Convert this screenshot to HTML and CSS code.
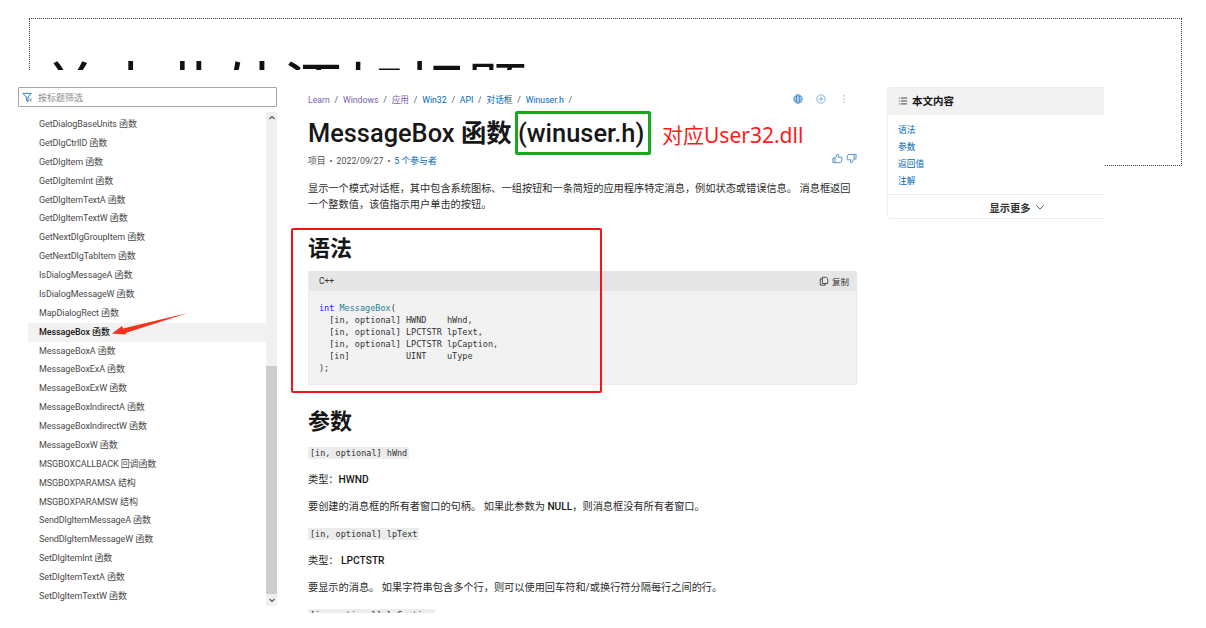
FILE: index.html
```html
<!DOCTYPE html>
<html lang="zh-CN">
<head>
  <meta charset="UTF-8" />
  <meta name="viewport" content="width=device-width, initial-scale=1" />
  <title>MessageBox 函数</title>
  <link rel="stylesheet" href="styles.css">
</head>
<body>
  <div class="slide">
    <!-- slide title placeholder, mostly hidden behind the pasted picture -->
    <div class="placeholder">
      <div class="placeholder-clip">单击此处添加标题</div>
    </div>

    <div class="shot">
      <aside class="toc">
        <div class="filter">
          <svg class="filter-icon" viewBox="0 0 12 12" width="11" height="11" fill="none" stroke="#0067b8" stroke-width="0.9">
            <path d="M1 1.5h9L6.5 5.5v5L4.8 9.2V5.5z" />
            <path d="M8 7.5l2.5 2.5M10.5 7.5L8 10" stroke="#666" />
          </svg>
          <span>按标题筛选</span>
        </div>
        <div class="toc-body">
          <ul class="toc-list">
            <li>GetDialogBaseUnits 函数</li>
            <li>GetDlgCtrlID 函数</li>
            <li>GetDlgItem 函数</li>
            <li>GetDlgItemInt 函数</li>
            <li>GetDlgItemTextA 函数</li>
            <li>GetDlgItemTextW 函数</li>
            <li>GetNextDlgGroupItem 函数</li>
            <li>GetNextDlgTabItem 函数</li>
            <li>IsDialogMessageA 函数</li>
            <li>IsDialogMessageW 函数</li>
            <li>MapDialogRect 函数</li>
            <li class="active">MessageBox 函数</li>
            <li>MessageBoxA 函数</li>
            <li>MessageBoxExA 函数</li>
            <li>MessageBoxExW 函数</li>
            <li>MessageBoxIndirectA 函数</li>
            <li>MessageBoxIndirectW 函数</li>
            <li>MessageBoxW 函数</li>
            <li>MSGBOXCALLBACK 回调函数</li>
            <li>MSGBOXPARAMSA 结构</li>
            <li>MSGBOXPARAMSW 结构</li>
            <li>SendDlgItemMessageA 函数</li>
            <li>SendDlgItemMessageW 函数</li>
            <li>SetDlgItemInt 函数</li>
            <li>SetDlgItemTextA 函数</li>
            <li>SetDlgItemTextW 函数</li>
          </ul>
          <div class="scrollbar">
            <svg class="sb-arrow" viewBox="0 0 10 10" width="10" height="10" fill="none" stroke="#555" stroke-width="1.2"><path d="M2.5 6l2.5-2.5L7.5 6" /></svg>
            <div class="sb-track"><div class="sb-thumb"></div></div>
            <svg class="sb-arrow" viewBox="0 0 10 10" width="10" height="10" fill="none" stroke="#555" stroke-width="1.2"><path d="M2.5 4l2.5 2.5L7.5 4" /></svg>
          </div>
        </div>
      </aside>

      <main class="article">
        <div class="crumbs-row">
          <div class="crumbs">
            <a class="visited">Learn</a><i>/</i><a class="visited">Windows</a><i>/</i><a class="visited">应用</a><i>/</i><a>Win32</a><i>/</i><a>API</a><i>/</i><a>对话框</a><i>/</i><a>Winuser.h</a><i>/</i>
          </div>
          <div class="actions">
            <svg viewBox="0 0 12 12" width="10" height="10" fill="none" stroke="#2f7fc4" stroke-width="1">
              <circle cx="6" cy="6" r="5" />
              <ellipse cx="6" cy="6" rx="2.2" ry="5" />
              <path d="M1 6h10M1.8 3.5h8.4M1.8 8.5h8.4" />
            </svg>
            <svg viewBox="0 0 12 12" width="10" height="10" fill="none" stroke="#5a9bd5" stroke-width="0.9">
              <circle cx="6" cy="6" r="5" />
              <path d="M6 3.2v5.6M3.2 6h5.6" />
            </svg>
            <svg viewBox="0 0 12 12" width="10" height="10" fill="#7fb2de">
              <circle cx="6" cy="2" r="0.9" />
              <circle cx="6" cy="6" r="0.9" />
              <circle cx="6" cy="10" r="0.9" />
            </svg>
          </div>
        </div>

        <h1 class="title">MessageBox <span class="title-cjk">函数</span> (winuser.h)</h1>

        <div class="meta-row">
          <div class="meta">项目<b>•</b>2022/09/27<b>•</b><a>5 个参与者</a></div>
          <div class="thumbs">
            <svg viewBox="0 0 12 12" width="11" height="11" fill="none" stroke="#2f7fc4" stroke-width="0.9">
              <path d="M1 5.5h2.2v5H1zM3.2 5.5L6 1.2c1 0 1.3.8 1 1.8L6.6 4.6h3.6c.8 0 1 .7.8 1.3l-1 3.8c-.2.6-.5.8-1.1.8H3.2" />
            </svg>
            <svg viewBox="0 0 12 12" width="11" height="11" fill="none" stroke="#2f7fc4" stroke-width="0.9">
              <path d="M11 6.5H8.8v-5H11zM8.8 6.500L6 10.800c-1 0-1.300-.8-1-1.800l.4-1.600H1.800c-.8 0-1-.7-.8-1.300l1-3.800c.2-.6.5-.8 1.100-.8h5.700" />
            </svg>
          </div>
        </div>

        <p class="lead">显示一个模式对话框，其中包含系统图标、一组按钮和一条简短的应用程序特定消息，例如状态或错误信息。 消息框返回一个整数值，该值指示用户单击的按钮。</p>

        <h2 class="section">语法</h2>

        <div class="code">
          <div class="code-head">
            <span>C++</span>
            <span class="copy">
              <svg viewBox="0 0 12 12" width="10" height="10" fill="none" stroke="#333" stroke-width="1">
                <path d="M4 1.500h4.500l2 2V9H4zM4 3.500H1.500V11H7.500V9" />
              </svg>
              复制
            </span>
          </div>
<pre class="code-body"><span class="kw">int</span> <span class="fn">MessageBox</span>(
  [in, optional] HWND    hWnd,
  [in, optional] LPCTSTR lpText,
  [in, optional] LPCTSTR lpCaption,
  [in]           UINT    uType
);</pre>
        </div>

        <h2 class="section params">参数</h2>

        <p class="param"><code>[in, optional] hWnd</code></p>
        <p class="param">类型：<strong>HWND</strong></p>
        <p class="param">要创建的消息框的所有者窗口的句柄。 如果此参数为 <strong>NULL</strong>，则消息框没有所有者窗口。</p>
        <p class="param"><code>[in, optional] lpText</code></p>
        <p class="param">类型： <strong>LPCTSTR</strong></p>
        <p class="param">要显示的消息。 如果字符串包含多个行，则可以使用回车符和/或换行符分隔每行之间的行。</p>
        <p class="param"><code>[in, optional] lpCaption</code></p>
      </main>

      <aside class="outline">
        <div class="outline-head">
          <svg viewBox="0 0 12 12" width="10" height="10" fill="none" stroke="#222" stroke-width="1">
            <path d="M3.500 2.500H11M3.500 6H11M3.500 9.500H11M1 2.500h1M1 6h1M1 9.500h1" />
          </svg>
          本文内容
        </div>
        <ul class="outline-list">
          <li>语法</li>
          <li>参数</li>
          <li>返回值</li>
          <li>注解</li>
        </ul>
        <div class="outline-more">
          显示更多
          <svg viewBox="0 0 12 12" width="10" height="10" fill="none" stroke="#333" stroke-width="1"><path d="M1.500 4l4.500 4.500L10.500 4" /></svg>
        </div>
      </aside>
    </div>

    <!-- annotations drawn on top of the picture -->
    <div class="mark mark-green"></div>
    <div class="mark mark-red"></div>
    <div class="note">对应User32.dll</div>
    <svg class="arrow" viewBox="0 0 80 26" width="80" height="26">
      <path d="M78 2L13 17.500 12 15 2 22.500 15 23.500 17 21.500z" fill="#f5321e" />
    </svg>
  </div>
</body>
</html>
```

FILE: styles.css
```css
* {
  box-sizing: border-box;
}
html, body {
  margin: 0;
  padding: 0;
  background: #fff;
}
body {
  font-family: Roboto, "Noto Sans CJK SC", sans-serif;
  color: #171717;
}
.slide {
  position: relative;
  width: 1206px;
  height: 628px;
  overflow: hidden;
  background: #fff;
}

.placeholder {
  position: absolute;
  left: 29px;
  top: 18px;
  width: 1153px;
  height: 148px;
  border: 1px dotted #444;
}
.placeholder-clip {
  height: 51px;
  overflow: hidden;
  padding: 28px 0 0 9px;
  font-family: "Noto Sans CJK SC", sans-serif;
  font-size: 61px;
  line-height: 80px;
  color: #111;
  white-space: nowrap;
}

/* pasted screenshot */
.shot {
  position: absolute;
  left: 0;
  top: 70px;
  width: 1104px;
  height: 543px;
  background: #fff;
  display: flex;
  overflow: hidden;
}

/* left tree */
.toc {
  width: 308px;
  flex: none;
  padding: 17px 0 0 18px;
}
.filter {
  width: 259px;
  height: 20px;
  border: 1px solid #a6a6a6;
  border-radius: 1px;
  display: flex;
  align-items: center;
  gap: 5px;
  padding-left: 3px;
  font-size: 9px;
  color: #8a8a8a;
}
.toc-body {
  display: flex;
  margin-top: 5px;
  padding-left: 10px;
  width: 259px;
}
.toc-list {
  list-style: none;
  margin: 3px 0 0;
  padding: 0;
  width: 238px;
}
.toc-list li {
  height: 18.88px;
  line-height: 18.88px;
  padding-left: 11px;
  font-size: 9px;
  letter-spacing: -0.1px;
  color: #4a4a4a;
  white-space: nowrap;
}
.toc-list li.active {
  background: #f2f2f2;
  color: #171717;
  font-weight: 500;
}
.scrollbar {
  width: 11px;
  height: 494px;
  background: #f0f0f0;
  display: flex;
  flex-direction: column;
  align-items: center;
}
.sb-arrow {
  flex: none;
  margin: 1px 0;
}
.sb-track {
  flex: 1;
  width: 100%;
  display: flex;
  flex-direction: column;
  justify-content: flex-end;
}
.sb-thumb {
  height: 228px;
  background: #cdcdcd;
}

/* article column */
.article {
  width: 549px;
  flex: none;
  padding-top: 22px;
  font-size: 10px;
}
.crumbs-row {
  display: flex;
  justify-content: space-between;
  align-items: center;
  height: 14px;
}
.crumbs {
  font-size: 8.7px;
  white-space: nowrap;
}
.crumbs a {
  color: #0067b8;
}
.crumbs a.visited {
  color: #7a5fa8;
}
.crumbs i {
  font-style: normal;
  color: #555;
  margin: 0 4.8px;
}
.actions {
  display: flex;
  gap: 13px;
  padding-right: 8px;
}
.title {
  margin: 9px 0 0;
  font-size: 25.4px;
  line-height: 36px;
  font-weight: 500;
  white-space: nowrap;
}
.title-cjk {
  font-weight: 700;
}
.meta-row {
  display: flex;
  justify-content: space-between;
  align-items: flex-start;
  margin-top: 2px;
  height: 16px;
}
.meta {
  font-size: 8.8px;
  line-height: 16px;
  color: #505050;
}
.meta b {
  font-weight: 400;
  margin: 0 4px;
}
.meta a {
  color: #0067b8;
}
.thumbs {
  display: flex;
  gap: 3px;
}
.lead {
  margin: 12px 0 0;
  font-size: 10.2px;
  line-height: 16px;
  color: #2b2b2b;
}
.section {
  margin: 21px 0 0;
  font-size: 22px;
  line-height: 30px;
  font-weight: 700;
}
.code {
  margin-top: 7px;
  background: #f2f2f2;
  border: 1px solid #ebebeb;
  border-top: 0;
}
.code-head {
  height: 20px;
  background: #e6e6e6;
  display: flex;
  justify-content: space-between;
  align-items: center;
  padding: 0 7px 0 10px;
  font-size: 8.5px;
  color: #333;
}
.copy {
  display: flex;
  align-items: center;
  gap: 3px;
}
.code-body {
  margin: 0;
  padding: 11px 10px 10px;
  font-family: "DejaVu Sans Mono", monospace;
  font-size: 8.5px;
  line-height: 12px;
  color: #333;
}
.kw {
  color: #1a1aff;
}
.fn {
  color: #1f7f93;
}
.params {
  margin: 22px 0 -3px;
}
.param {
  margin: 0;
  font-size: 10.2px;
  line-height: 16px;
  padding-top: 11px;
  color: #2b2b2b;
  white-space: nowrap;
}
.param strong {
  color: #171717;
  font-weight: 500;
}
.param code {
  display: inline-block;
  background: #ececec;
  padding: 0 2px;
  font-family: "DejaVu Sans Mono", monospace;
  font-size: 8.5px;
  line-height: 12px;
  color: #333;
}

/* right outline */
.outline {
  flex: none;
  margin: 17px 0 0 30px;
  width: 260px;
  height: 132px;
  border: 1px solid #ededed;
  border-radius: 3px;
}
.outline-head {
  height: 27px;
  padding: 0 0 2px 10px;
  background: #f2f2f2;
  display: flex;
  align-items: center;
  gap: 4px;
  font-size: 10.5px;
  font-weight: 600;
}
.outline-list {
  list-style: none;
  margin: 0;
  padding: 7px 0 0 10px;
  height: 80px;
  border-bottom: 1px solid #ededed;
  font-size: 8.7px;
  color: #0067b8;
}
.outline-list li {
  height: 16.9px;
  line-height: 16.9px;
}
.outline-more {
  height: 24px;
  display: flex;
  align-items: center;
  justify-content: center;
  gap: 4px;
  font-size: 10.3px;
  font-weight: 600;
  color: #333;
}

/* annotations */
.mark {
  position: absolute;
  border-radius: 2px;
}
.mark-green {
  left: 515px;
  top: 111px;
  width: 136px;
  height: 44px;
  border: 3px solid #17a81c;
}
.mark-red {
  left: 291px;
  top: 228px;
  width: 311px;
  height: 165px;
  border: 2px solid #f81414;
}
.note {
  position: absolute;
  left: 662px;
  top: 120px;
  font-family: "Noto Sans", "Noto Sans CJK SC", sans-serif;
  font-size: 21px;
  line-height: 30px;
  color: #ff1a1a;
  white-space: nowrap;
}
.arrow {
  position: absolute;
  left: 110px;
  top: 311px;
}
```
